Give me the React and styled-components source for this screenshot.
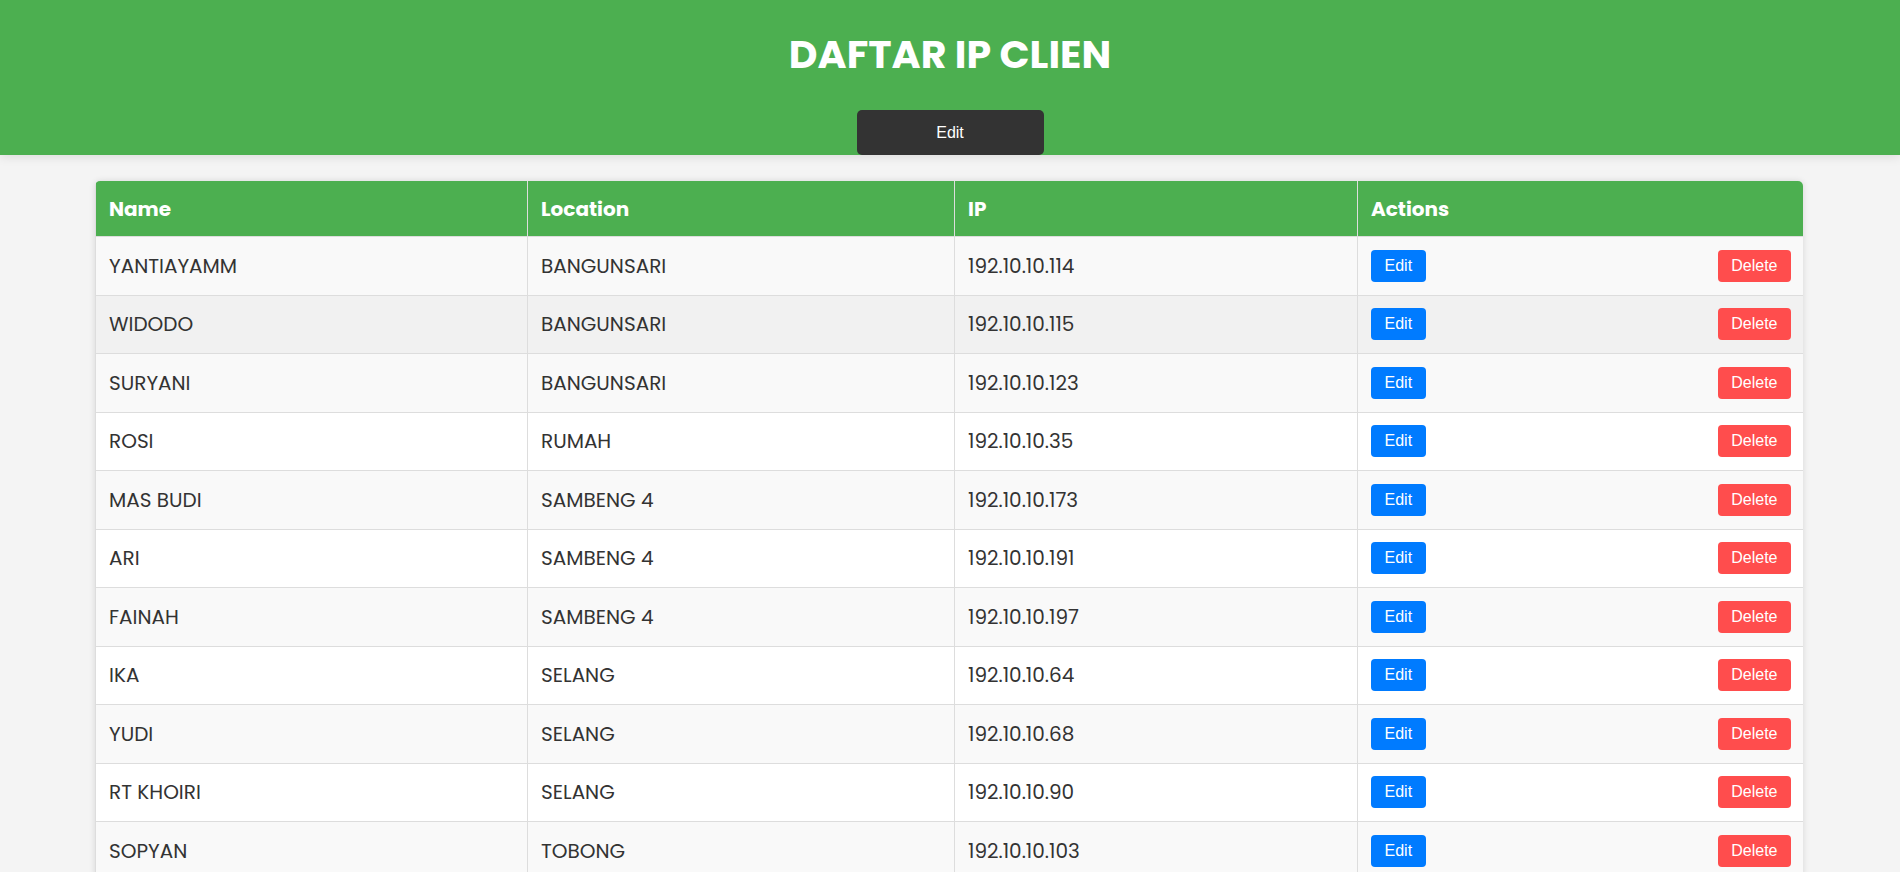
import React from 'react';
import styled, { createGlobalStyle } from 'styled-components';

const GlobalStyle = createGlobalStyle`
  html, body {
    margin: 0;
    padding: 0;
    overflow: hidden;
  }
  body {
    background: #f4f4f4;
    font-family: Poppins, Inter, "Liberation Sans", sans-serif;
    color: #333;
  }
`;

const Header = styled.header`
  background: #4caf50;
  height: 155px;
  display: flex;
  flex-direction: column;
  align-items: center;
  padding-top: 20px;
  box-sizing: border-box;
  box-shadow: 0 2px 10px rgba(0, 0, 0, 0.1);
  position: relative;
  z-index: 1;
`;

const Title = styled.h1`
  margin: 0;
  font-size: 39.5px;
  font-weight: 700;
  line-height: 70px;
  color: #fff;
`;

const TopButton = styled.button`
  margin-top: 20px;
  width: 187px;
  height: 45px;
  border: none;
  border-radius: 5px;
  background: #333;
  color: #fff;
  font-family: "Liberation Sans", Arial, sans-serif;
  font-size: 16px;
  cursor: pointer;
`;

const Main = styled.main`
  padding: 26px 0;
`;

const TableWrap = styled.div`
  width: 1708px;
  margin: 0 97px 0 95px;
  border-radius: 5px;
  overflow: hidden;
  box-shadow: 0 0 6px rgba(0, 0, 0, 0.12);
`;

const Table = styled.table`
  width: 100%;
  border-collapse: collapse;
  table-layout: fixed;
`;

const Th = styled.th`
  background: #4caf50;
  color: #fff;
  font-size: 20px;
  font-weight: 700;
  text-align: left;
  height: 55px;
  padding: 0 12px 0 13px;
  border: 1px solid #ddd;
  border-top: none;
`;

const Tr = styled.tr`
  background: ${(p) => (p.$hover ? '#f1f1f1' : p.$odd ? '#f9f9f9' : '#fff')};
`;

const Td = styled.td`
  height: 58.5px;
  padding: 0 12px 0 13px;
  border: 1px solid #ddd;
  font-size: 20px;
  font-weight: 400;
  color: #333;
  box-sizing: border-box;
`;

const Actions = styled.div`
  display: flex;
  justify-content: space-between;
  align-items: center;
`;

const SmallButton = styled.button`
  height: 32px;
  padding: 0 13.5px;
  border: none;
  border-radius: 4px;
  background: ${(p) => (p.$danger ? '#ff4d4d' : '#007bff')};
  color: #fff;
  font-family: "Liberation Sans", Arial, sans-serif;
  font-size: 16px;
  cursor: pointer;
`;

const clients = [
  ['YANTIAYAMM', 'BANGUNSARI', '192.10.10.114'],
  ['WIDODO', 'BANGUNSARI', '192.10.10.115'],
  ['SURYANI', 'BANGUNSARI', '192.10.10.123'],
  ['ROSI', 'RUMAH', '192.10.10.35'],
  ['MAS BUDI', 'SAMBENG 4', '192.10.10.173'],
  ['ARI', 'SAMBENG 4', '192.10.10.191'],
  ['FAINAH', 'SAMBENG 4', '192.10.10.197'],
  ['IKA', 'SELANG', '192.10.10.64'],
  ['YUDI', 'SELANG', '192.10.10.68'],
  ['RT KHOIRI', 'SELANG', '192.10.10.90'],
  ['SOPYAN', 'TOBONG', '192.10.10.103'],
];

export default function App() {
  return (
    <>
      <GlobalStyle />
      <Header>
        <Title>DAFTAR IP CLIEN</Title>
        <TopButton>Edit</TopButton>
      </Header>
      <Main>
        <TableWrap>
          <Table>
            <colgroup>
              <col style={{ width: 432 }} />
              <col style={{ width: 427 }} />
              <col style={{ width: 403 }} />
              <col style={{ width: 446 }} />
            </colgroup>
            <thead>
              <tr>
                <Th>Name</Th>
                <Th>Location</Th>
                <Th>IP</Th>
                <Th>Actions</Th>
              </tr>
            </thead>
            <tbody>
              {clients.map(([name, loc, ip], i) => (
                <Tr key={ip} $odd={i % 2 === 0} $hover={i === 1}>
                  <Td>{name}</Td>
                  <Td>{loc}</Td>
                  <Td>{ip}</Td>
                  <Td>
                    <Actions>
                      <SmallButton>Edit</SmallButton>
                      <SmallButton $danger>Delete</SmallButton>
                    </Actions>
                  </Td>
                </Tr>
              ))}
            </tbody>
          </Table>
        </TableWrap>
      </Main>
    </>
  );
}
